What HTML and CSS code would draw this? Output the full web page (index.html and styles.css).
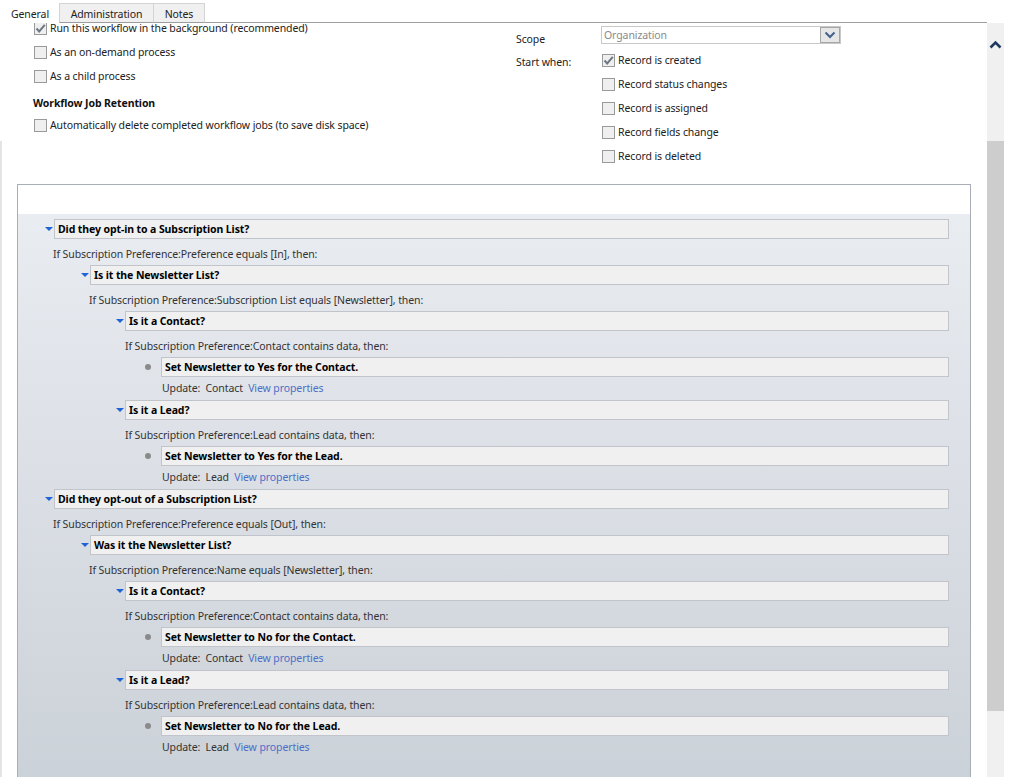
FILE: index.html
```html
<!DOCTYPE html>
<html lang="en">
<head>
<meta charset="utf-8">
<title>Workflow</title>
<link rel="stylesheet" href="styles.css">
</head>
<body>
<div class="window">
  <div class="tabs">
    <div class="tab active">General</div>
    <div class="tab admin">Administration</div>
    <div class="tab notes">Notes</div>
    <div class="tab-fill"></div>
  </div>
  <div class="main">
    <div class="content">
      <div class="form">
        <div class="col-left">
          <div class="cb-row"><span class="cb checked"><svg viewBox="0 0 13 13" width="13" height="13"><polyline points="2.5,6.5 5.2,9.5 10.8,2.8" fill="none" stroke="#6f7784" stroke-width="2"/></svg></span><span>Run this workflow in the background (recommended)</span></div>
          <div class="cb-row"><span class="cb"></span><span>As an on-demand process</span></div>
          <div class="cb-row"><span class="cb"></span><span>As a child process</span></div>
          <div class="section-title">Workflow Job Retention</div>
          <div class="cb-row"><span class="cb"></span><span>Automatically delete completed workflow jobs (to save disk space)</span></div>
        </div>
        <div class="col-right">
          <div class="field-label scope">Scope</div>
          <div class="select">
            <span class="select-text">Organization</span>
            <span class="select-btn"><svg viewBox="0 0 18 14" width="18" height="14"><polyline points="4.5,4.5 9,9 13.5,4.5" fill="none" stroke="#44608c" stroke-width="2"/></svg></span>
          </div>
          <div class="field-label start">Start when:</div>
          <div class="cb-list">
            <div class="cb-row"><span class="cb checked"><svg viewBox="0 0 13 13" width="13" height="13"><polyline points="2.5,6.5 5.2,9.5 10.8,2.8" fill="none" stroke="#6f7784" stroke-width="2"/></svg></span><span>Record is created</span></div>
            <div class="cb-row"><span class="cb"></span><span>Record status changes</span></div>
            <div class="cb-row"><span class="cb"></span><span>Record is assigned</span></div>
            <div class="cb-row"><span class="cb"></span><span>Record fields change</span></div>
            <div class="cb-row"><span class="cb"></span><span>Record is deleted</span></div>
          </div>
        </div>
      </div>

      <div class="designer">
        <div class="designer-head"></div>
        <div class="designer-body">
          <div class="hdr l1"><span class="tri"></span><div class="box">Did they opt-in to a Subscription List?</div></div>
          <div class="cond l1">If Subscription Preference:Preference equals [In], then:</div>
          <div class="hdr l2"><span class="tri"></span><div class="box">Is it the Newsletter List?</div></div>
          <div class="cond l2">If Subscription Preference:Subscription List equals [Newsletter], then:</div>
          <div class="hdr l3"><span class="tri"></span><div class="box">Is it a Contact?</div></div>
          <div class="cond l3">If Subscription Preference:Contact contains data, then:</div>
          <div class="hdr act"><span class="dot"></span><div class="box">Set Newsletter to Yes for the Contact.</div></div>
          <div class="upd">Update:&nbsp; Contact&nbsp; <span class="link">View properties</span></div>
          <div class="hdr l3"><span class="tri"></span><div class="box">Is it a Lead?</div></div>
          <div class="cond l3">If Subscription Preference:Lead contains data, then:</div>
          <div class="hdr act"><span class="dot"></span><div class="box">Set Newsletter to Yes for the Lead.</div></div>
          <div class="upd">Update:&nbsp; Lead&nbsp; <span class="link">View properties</span></div>

          <div class="hdr l1"><span class="tri"></span><div class="box">Did they opt-out of a Subscription List?</div></div>
          <div class="cond l1">If Subscription Preference:Preference equals [Out], then:</div>
          <div class="hdr l2"><span class="tri"></span><div class="box">Was it the Newsletter List?</div></div>
          <div class="cond l2">If Subscription Preference:Name equals [Newsletter], then:</div>
          <div class="hdr l3"><span class="tri"></span><div class="box">Is it a Contact?</div></div>
          <div class="cond l3">If Subscription Preference:Contact contains data, then:</div>
          <div class="hdr act"><span class="dot"></span><div class="box">Set Newsletter to No for the Contact.</div></div>
          <div class="upd">Update:&nbsp; Contact&nbsp; <span class="link">View properties</span></div>
          <div class="hdr l3"><span class="tri"></span><div class="box">Is it a Lead?</div></div>
          <div class="cond l3">If Subscription Preference:Lead contains data, then:</div>
          <div class="hdr act"><span class="dot"></span><div class="box">Set Newsletter to No for the Lead.</div></div>
          <div class="upd">Update:&nbsp; Lead&nbsp; <span class="link">View properties</span></div>
        </div>
      </div>
    </div>
    <div class="scrollbar">
      <div class="sb-top"><svg viewBox="0 0 17 12" width="17" height="12"><polyline points="3.5,8.5 8.5,3.5 13.5,8.5" fill="none" stroke="#1f3a5e" stroke-width="2.6"/></svg></div>
      <div class="sb-thumb"></div>
      <div class="sb-rest"></div>
    </div>
    <div class="gutter"></div>
  </div>
</div>
</body>
</html>
```

FILE: styles.css
```css
* { box-sizing: border-box; }
html, body { margin: 0; padding: 0; background: #fff; }
body {
  font-family: "Noto Sans", "Open Sans", sans-serif;
  font-size: 10.5px;
  letter-spacing: -0.1px;
  color: #222;
}
.window { width: 1009px; height: 777px; overflow: hidden; display: flex; flex-direction: column; }

/* tabs */
.tabs { display: flex; height: 23px; width: 987px; flex: none; align-items: flex-end; }
.tab {
  height: 20px;
  padding-top: 2px;
  line-height: 16px;
  text-align: center;
  background: #f0f0f0;
  border: 1px solid #d4d4d4;
  border-bottom: 1px solid #9d9d9d;
  color: #222;
  margin-left: -1px;
}
.tab.active {
  background: #fff; border-color: #fff; border-bottom-color: #fff;
  height: 23px; padding-top: 5px; margin-left: 0; width: 60px;
}
.tab.admin { width: 95px; }
.tab.notes { width: 52px; }
.tab-fill { flex: 1; border-bottom: 1px solid #9d9d9d; height: 1px; }

.main { flex: 1; display: flex; min-height: 0; }
.content {
  width: 987px;
  overflow: hidden;
  background: linear-gradient(#e4e4e4, #e4e4e4) no-repeat 0 118px / 2px 100%;
}

/* form */
.form { display: flex; height: 168px; margin-top: -7px; }
.col-left { width: 516px; padding-left: 34px; }
.cb-row { display: flex; align-items: center; height: 24px; gap: 3px; white-space: nowrap; }
.cb {
  width: 13px; height: 13px; flex: none;
  border: 1px solid #9a9a9a;
  background: #efefef;
  position: relative;
}
.cb svg { position: absolute; left: -1px; top: -1px; }
.section-title { font-weight: bold; color: #111; margin-left: -1px; padding-top: 7px; padding-bottom: 2px; line-height: 16px; }

.col-right {
  padding-top: 10px;
  display: grid;
  grid-template-columns: 85px 240px;
  align-content: start;
}
.field-label { color: #222; line-height: 16px; }
.field-label.scope { padding-top: 5px; }
.field-label.start { padding-top: 7px; }
.select {
  height: 18px;
  border: 1px solid #c8c8c8;
  display: flex;
  align-items: center;
  justify-content: space-between;
  padding-left: 2px;
}
.select-text { color: #8a8a8a; }
.select-btn {
  width: 20px; height: 16px;
  border: 1px solid #a7a7a7;
  background: #e6e6e6;
  display: flex; align-items: center; justify-content: center;
}
.cb-list { padding-left: 1px; padding-top: 1px; }

/* designer */
.designer {
  margin-left: 17px;
  width: 954px;
  height: 600px;
  border: 1px solid #a8aeb6;
  border-bottom: none;
  display: flex;
  flex-direction: column;
}
.designer-head { height: 29px; background: #fff; flex: none; }
.designer-body {
  flex: 1;
  padding-top: 5px;
  background: linear-gradient(#e9ecf1, #cbd1d8);
}
.hdr { display: flex; align-items: center; height: 20px; padding-right: 21px; }
.hdr.l1 { padding-left: 27px; }
.hdr.l2 { padding-left: 63px; }
.hdr.l3 { padding-left: 98px; }
.hdr.act { padding-left: 127px; }
.tri {
  width: 0; height: 0; flex: none;
  border-left: 4px solid transparent;
  border-right: 4px solid transparent;
  border-top: 4px solid #1f63d8;
  margin-right: 1px;
}
.dot { width: 6px; height: 6px; border-radius: 50%; background: #8a8a8a; flex: none; margin-right: 10px; }
.box {
  flex: 1;
  height: 20px;
  border: 1px solid #c1c5cb;
  background: #f0f0f0;
  font-weight: bold;
  color: #000;
  line-height: 18px;
  padding-left: 3px;
  white-space: nowrap;
}
.cond { height: 26px; padding-top: 7px; line-height: 16px; color: #333; white-space: nowrap; }
.cond.l1 { padding-left: 35px; }
.cond.l2 { padding-left: 71px; }
.cond.l3 { padding-left: 107px; }
.upd { height: 23px; padding-top: 3px; line-height: 16px; padding-left: 144px; color: #333; white-space: nowrap; }
.link { color: #4c6fc6; }

/* scrollbar */
.scrollbar { width: 17px; display: flex; flex-direction: column; background: #f0f0f0; flex: none; }
.sb-top { height: 118px; padding-top: 16px; flex: none; }
.sb-top svg { display: block; }
.sb-thumb { height: 570px; background: #cdcdcd; flex: none; }
.sb-rest { flex: 1; }
.gutter { flex: 1; }
```
